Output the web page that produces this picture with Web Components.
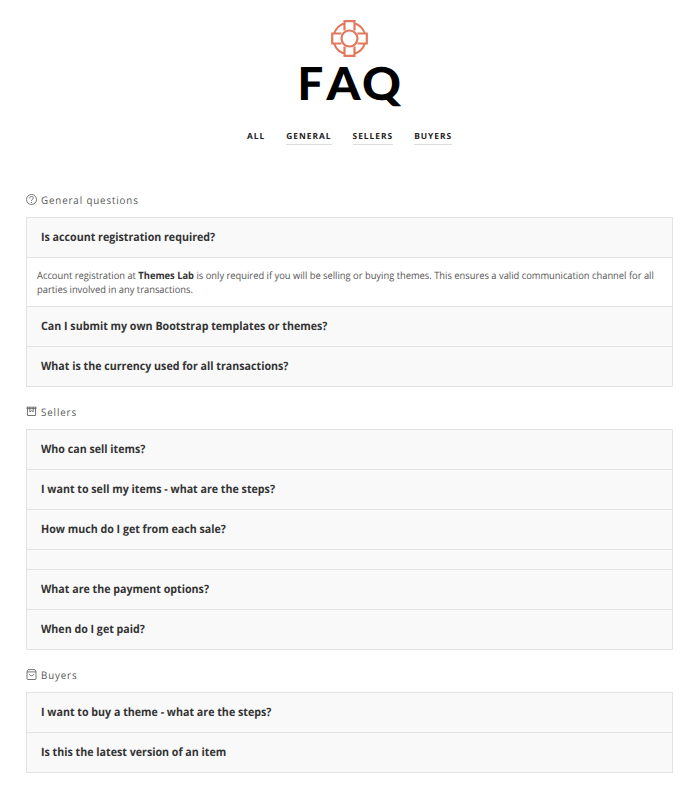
<!DOCTYPE html>
<html lang="en"><head><meta charset="utf-8"><title>FAQ</title>
<style>body{margin:0;background:#fff;font-family:"Open Sans",sans-serif;color:#333;text-rendering:geometricPrecision}</style></head>
<body><faq-page></faq-page>
<script>
const define=(name,html)=>customElements.define(name,class extends HTMLElement{
  constructor(){super();const t=document.createElement('template');t.innerHTML=html;
    this.attachShadow({mode:'open'}).append(t.content.cloneNode(true));}
});
define('faq-hero',`<style>:host{display:flex;flex-direction:column;align-items:center;padding-top:20px;height:88px}
svg{display:block;overflow:visible}
text{font-family:Lato,sans-serif;font-weight:900;font-size:45.5px;fill:#000}</style>
<svg width="38" height="38" viewBox="0 0 38 38" fill="none" stroke="#e2785c" stroke-width="2.2"><circle cx="18.5" cy="18.5" r="8"/>
<path d="M13.5 1.2h10v9.3M13.5 .2v10.3M13.5 35.8h10v-9.3M13.5 36.8v-10.3M1.2 13.5v10h9.3M.2 13.5h10.3M35.8 13.5v10h-9.3M36.8 13.5h-10.3M13.5 3.2A16.2 16.2 0 0 0 3.2 13.5M23.5 3.2A16.2 16.2 0 0 1 33.8 13.5M3.2 23.5A16.2 16.2 0 0 0 13.5 33.8M33.8 23.5A16.2 16.2 0 0 1 23.5 33.8"/></svg>
<svg width="104" height="48" viewBox="298 58 104 48"><text x="297.5" y="100">F</text><text x="326.5" y="100" textLength="34" lengthAdjust="spacingAndGlyphs">A</text><text x="362" y="100" textLength="39" lengthAdjust="spacingAndGlyphs">Q</text></svg>`);
define('faq-tabs',`<style>:host{display:flex;gap:21px;padding:20px 0 0 247px;height:65px;box-sizing:border-box}</style><slot></slot>`);
define('faq-tab',`<style>:host{display:block;height:16px;font-size:8.4px;line-height:17px;font-weight:700;letter-spacing:1px;color:#222;white-space:nowrap;border-bottom:1px solid #ddd}
:host([active]){border-color:transparent}</style><slot></slot>`);
define('faq-group',`<style>:host{display:block;margin:0 27px 0 26px}
header{display:flex;align-items:center;height:44px;padding-top:9px;font-size:10.4px;letter-spacing:.95px;color:#555;gap:4px;box-sizing:border-box}
.t{padding-top:2px;transform:scaleX(.935);transform-origin:left}
.list{border:1px solid #e3e3e3;border-bottom:0}
</style><header><slot name="icon"></slot><div class="t"><slot name="title"></slot></div></header><div class="list"><slot></slot></div>`);
define('faq-item',`<style>:host{display:block;height:39px;background:#f9f9f9;border-bottom:1px solid #e3e3e3;padding-left:14px;font-size:11.5px;line-height:39px;font-weight:700;color:#333;white-space:nowrap}
:host([empty]){height:19px}
div{transform:scaleX(.928);transform-origin:left}</style><div><slot></slot></div>`);
define('faq-answer',`<style>:host{display:block;height:48px;box-sizing:content-box;border-bottom:1px solid #e3e3e3;font-size:10px;line-height:14px;color:#555;white-space:nowrap}
p{margin:0;padding:10px 0;margin-left:10px;transform:scaleX(.934);transform-origin:left}::slotted(b){color:#333}</style><p><slot></slot></p>`);
define('faq-icon',`<style>:host{display:block;width:11px;height:11px}::slotted(svg){display:block;width:11px;height:11px;overflow:visible;fill:none;stroke:#666;stroke-width:.9}</style><slot></slot>`);
define('faq-page',`<style>:host{display:block;width:700px;height:796px;overflow:hidden}
faq-group{height:212px}.g2{height:263px}</style>
<faq-hero></faq-hero>
<faq-tabs><faq-tab active>ALL</faq-tab><faq-tab>GENERAL</faq-tab><faq-tab>SELLERS</faq-tab><faq-tab>BUYERS</faq-tab></faq-tabs>
<faq-group><faq-icon slot="icon"><svg viewBox="0 0 11 11"><circle cx="5.5" cy="5.5" r="5"/><path d="M3.8 4.4V4c0-2.1 3.5-2.1 3.5 0C7.3 5.3 5.5 5.3 5.5 7M5.5 8v1"/></svg></faq-icon><span slot="title">General questions</span>
<faq-item>Is account registration required?</faq-item>
<faq-answer>Account registration at <b>Themes Lab</b> is only required if you will be selling or buying themes. This ensures a valid communication channel for all<br>parties involved in any transactions.</faq-answer>
<faq-item>Can I submit my own Bootstrap templates or themes?</faq-item>
<faq-item>What is the currency used for all transactions?</faq-item></faq-group>
<faq-group class="g2"><faq-icon slot="icon"><svg viewBox="0 0 11 11"><path d="M.5 1.2h10M1.5 1.2v8.3h8V1.2M3.8 1.2v4.6l1.7-1.1 1.7 1.1V1.2M.5 2.6h10"/></svg></faq-icon><span slot="title">Sellers</span>
<faq-item>Who can sell items?</faq-item><faq-item>I want to sell my items - what are the steps?</faq-item><faq-item>How much do I get from each sale?</faq-item><faq-item empty></faq-item><faq-item>What are the payment options?</faq-item><faq-item>When do I get paid?</faq-item></faq-group>
<faq-group><faq-icon slot="icon"><svg viewBox="0 0 11 11"><path d="M1 2.7 2.2.6h6.6L10 2.7v6.8q0 1-1 1H2q-1 0-1-1zM1 2.9h9M3.3 4.9c.3 2.4 4.1 2.4 4.4 0"/></svg></faq-icon><span slot="title">Buyers</span>
<faq-item>I want to buy a theme - what are the steps?</faq-item><faq-item>Is this the latest version of an item</faq-item></faq-group>`);
</script></body></html>
